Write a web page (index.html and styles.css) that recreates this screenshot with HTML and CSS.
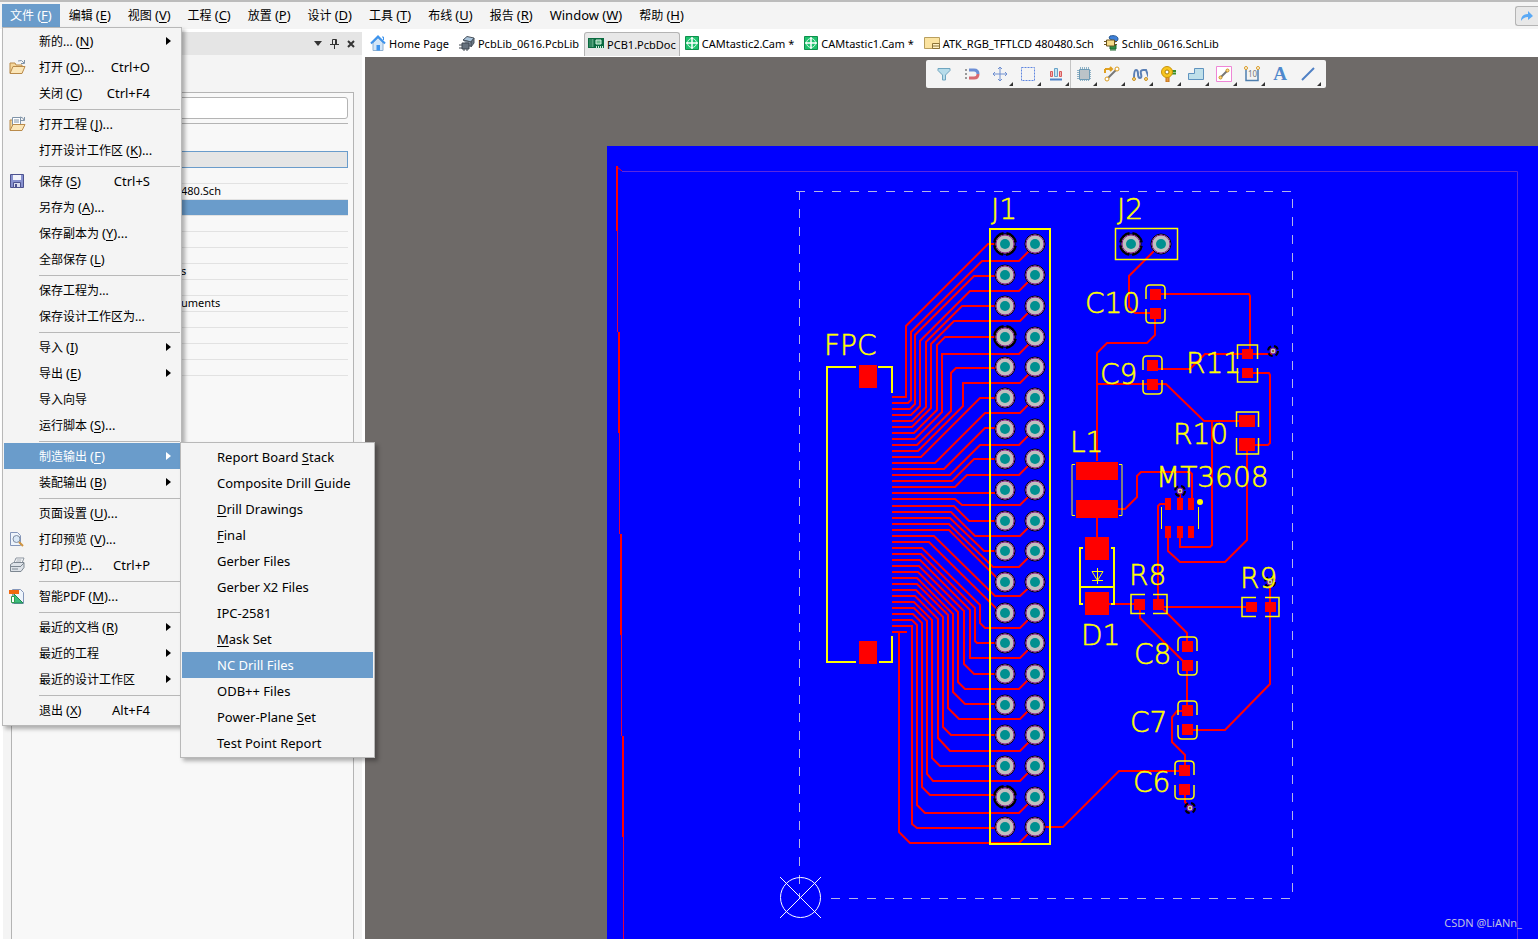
FILE: index.html
```html
<!DOCTYPE html>
<html lang="zh-CN">

<head>
    <meta charset="UTF-8">
    <meta name="viewport" content="width=device-width, initial-scale=1.0">
    <title>PCB1.PcbDoc</title>
    <link rel="stylesheet" href="styles.css">
</head>

<body>

    <!-- Top menu bar -->
    <header class="menubar">
        <nav class="menubar-items">
            <button class="open">文件 <span class="key">(<u>F</u>)</span></button>
            <button>编辑 <span class="key">(<u>E</u>)</span></button>
            <button>视图 <span class="key">(<u>V</u>)</span></button>
            <button>工程 <span class="key">(<u>C</u>)</span></button>
            <button>放置 <span class="key">(<u>P</u>)</span></button>
            <button>设计 <span class="key">(<u>D</u>)</span></button>
            <button>工具 <span class="key">(<u>T</u>)</span></button>
            <button>布线 <span class="key">(<u>U</u>)</span></button>
            <button>报告 <span class="key">(<u>R</u>)</span></button>
            <button><span class="key">Window (<u>W</u>)</span></button>
            <button>帮助 <span class="key">(<u>H</u>)</span></button>
        </nav>
        <button class="share" aria-label="Share">
            <svg width="14" height="12" viewBox="0 0 14 12"><path d="M1 11c0-5 3-7 7-7V1l5 5-5 4V7C5 7 3 8 1 11z" fill="#5aa9f5" /></svg>
        </button>
    </header>

    <div class="workspace">
        <!-- Projects panel -->
        <aside class="panel">
            <div class="panel-title">
                <svg width="8" height="5" viewBox="0 0 8 5"><path d="M0 0h8L4 5z" fill="#333" /></svg>
                <svg width="9" height="10" viewBox="0 0 9 10"><path d="M2.500 5V.5h4V5M0 5.500h9M4.500 6v4M5.500 0v5" fill="none" stroke="#333" /></svg>
                <svg width="8" height="8" viewBox="0 0 8 8"><path d="M1 1l6 6M7 1L1 7" stroke="#333" stroke-width="2" /></svg>
            </div>
            <div class="panel-box">
                <input type="text" class="panel-search" aria-label="Search">
                <ul class="tree">
                    <li class="focused"></li>
                    <li></li>
                    <li>480.Sch</li>
                    <li class="selected"></li>
                    <li></li>
                    <li></li>
                    <li></li>
                    <li>s</li>
                    <li></li>
                    <li>uments</li>
                    <li></li>
                    <li></li>
                    <li></li>
                    <li></li>
                </ul>
            </div>
        </aside>

        <main class="editor">
            <nav class="tabs">
                <a href="#">
                    <svg width="16" height="16" viewBox="0 0 16 16"><path d="M3 8v7.500h10V8L8 3z" fill="#d3e6f8" stroke="#8fb0d0" /><path d="M1 8.500l7-7 7 7" fill="none" stroke="#3d94ee" stroke-width="2" /><path d="M12 2h1.500v3" stroke="#3d94ee" fill="none" /><path d="M6.500 10h3.500v5.500H6.500z" fill="#3d94ee" /></svg>
                    Home Page</a>
                <a href="#">
                    <svg width="16" height="16" viewBox="0 0 16 16"><path d="M4 5l4-3.500 7 1.500-3 4z" fill="#a9c3da" stroke="#49535e" /><path d="M12 7l3-4v5l-3 4z" fill="#6d7a87" stroke="#49535e" /><path d="M4 5l8 2v4H9" fill="#8d9aa8" stroke="#49535e" /><path d="M3 8h7v6H3zM0 10h3M0 13h3M5 14v2M8 14v2" fill="#67727e" stroke="#3e4750" /></svg>
                    PcbLib_0616.PcbLib</a>
                <a href="#" class="active">
                    <svg width="16" height="16" viewBox="0 0 16 16"><path d="M0 2h16v10H0z" fill="#0a6b40" /><path d="M1.500 4h4M1.500 6h4M1.500 8h4M1.500 10h4" stroke="#a5e0bd" stroke-dasharray="1 1 3 0" /><path d="M8 4h5v4H8z" fill="#6dbb8e" stroke="#d2f0de" /><path d="M8.500 10v3M10.500 10v3M12.500 10v3M14.500 10v3" stroke="#d2f0de" /></svg>
                    PCB1.PcbDoc</a>
                <a href="#">
                    <svg width="14" height="14" viewBox="0 0 14 14"><path d="M.5.5h13v13H.5z" fill="#1ec26e" stroke="#0f8f4c" /><circle cx="7" cy="7" r="4.500" fill="none" stroke="#d7f6e5" /><path d="M7 1v12M1 7h12" stroke="#fff" stroke-width="1.500" /></svg>
                    CAMtastic2.Cam *</a>
                <a href="#">
                    <svg width="14" height="14" viewBox="0 0 14 14"><path d="M.5.5h13v13H.5z" fill="#1ec26e" stroke="#0f8f4c" /><circle cx="7" cy="7" r="4.500" fill="none" stroke="#d7f6e5" /><path d="M7 1v12M1 7h12" stroke="#fff" stroke-width="1.500" /></svg>
                    CAMtastic1.Cam *</a>
                <a href="#">
                    <svg width="16" height="12" viewBox="0 0 16 12"><path d="M.5.5h15v11H.5z" fill="#fbe3a0" stroke="#b99f5e" /><path d="M8.500 6.500h7v5h-7zM8.500 9h7" fill="#fff1c4" stroke="#8c7438" /></svg>
                    ATK_RGB_TFTLCD 480480.Sch</a>
                <a href="#">
                    <svg width="15" height="16" viewBox="0 0 15 16"><path d="M6 1c4-1 8 0 8 3 0 2-2 3-4 3L5 3z" fill="#3d7fd8" stroke="#23558f" /><path d="M6 10h6v4H6zM7 14v2M9 14v2M11 14v2" fill="#2f8f45" stroke="#1c6a2f" /><path d="M2.500 5h8v6h-8zM0 6.500h2M0 9.500h2M11 6.500h2M11 9.500h2" fill="#f7dd8a" stroke="#6a5522" /></svg>
                    Schlib_0616.SchLib</a>
            </nav>

            <div class="canvas">
                <svg class="board" viewBox="365 57 1173 882" preserveAspectRatio="xMinYMin slice">
                    <defs>
                        <g id="pad">
                            <circle r="10" fill="#c0c0c0" stroke="#000" />
                            <circle r="9" fill="none" stroke="#8a1a8a" />
                            <circle r="5" fill="#009090" />
                        </g>
                        <g id="thermal">
                            <circle r="11" fill="none" stroke="#000" stroke-width="2" stroke-dasharray="14 3" stroke-dashoffset="-2" />
                            <use href="#pad" />
                        </g>
                        <g id="row">
                            <use href="#pad" x="1005" />
                            <use href="#pad" x="1035" />
                        </g>
                        <g id="via">
                            <circle r="5" fill="none" stroke="#000" stroke-width="2" stroke-dasharray="5 3" />
                            <circle r="3" fill="#c0c0c0" stroke="#8a1a8a" />
                            <circle r="1" fill="#8a5a00" />
                        </g>
                        <!-- 0603 part, vertical, centred on 0,0 -->
                        <g id="cap">
                            <path class="pad-red" d="M-5-15H6V-4H-5zM-5 4H6v11H-5z" />
                            <path class="silk" d="M-9-5v-10q0-4 4-4H6q4 0 4 4v10M-9 5v10q0 4 4 4H6q4 0 4-4V5" />
                        </g>
                    </defs>

                    <rect x="607" y="146" width="931" height="793" fill="#00f" />
                    <path d="M622 171.500H1517.500V939M624 939" fill="none" stroke="#5a28e0" />
                    <path d="M622 171l-5-4" stroke="#e00030" />
                    <path d="M617 166v65M619 332v101M621 534v101M623 736v101" stroke="#f00" stroke-width="2" />
                    <path d="M617.500 231v101M619.500 433v101M621.500 635v101M623.500 837v102" stroke="#e00040" />
                    <path d="M799.500 191V898M1292.500 199V898M796 191.500H1292M831 898.500H1292" stroke="#b4b4e8" stroke-dasharray="9 9" />
                    <g stroke="#fff" fill="none">
                        <circle cx="800.500" cy="897.500" r="20" />
                        <path d="M780 877l41 41M780 918l41-41" />
                    </g>

                    <!-- FPC to J1 fan-out -->
                    <g class="trace">
                        <path d="M892 397H906V326L988 244H1005" />
                        <path d="M892 403H908L911 400V332L982 261H1019L1035 245" />
                        <path d="M892 409H910L915 404V335L974 276H1005" />
                        <path d="M892 415H911L920 406V341L970 291H1019L1035 275" />
                        <path d="M892 421H912L926 407V342L962 306H1005" />
                        <path d="M892 427H912L931 408V344L954 321H1020L1035 306" />
                        <path d="M892 433H914L937 410V345L945 337H1005" />
                        <path d="M892 439H915L942 412V354H1019L1035 338" />
                        <path d="M892 445H917L951 411V373L956 368H1005" />
                        <path d="M892 451H918L963 406V383H1020L1035 368" />
                        <path d="M892 457H921L980 398H1005" />
                        <path d="M892 463H935L985 413H1020L1035 398" />
                        <path d="M892 469H944L985 428H1005" />
                        <path d="M892 475H950L980 445H1019L1035 429" />
                        <path d="M892 481H952L974 459H1005" />
                        <path d="M892 487H955L967 475H1019L1035 459" />
                        <path d="M892 493H1005" />
                        <path d="M892 499H955L962 505H1020L1035 490" />
                        <path d="M892 506H954L969 521H1005" />
                        <path d="M892 512H951L975 536H1020L1035 521" />
                        <path d="M892 518H950L984 551H1005" />
                        <path d="M892 524H949L993 567H1019L1035 551" />
                        <path d="M892 530H949L1005 586" />
                        <path d="M892 536H934L995 596H1020L1035 582" />
                        <path d="M892 542H929L1005 617" />
                        <path d="M892 548H922L980 605V623L985 628H1020L1035 613" />
                        <path d="M892 554H921L975 608V641L977 643H1005" />
                        <path d="M892 560H920L970 610V658H1020L1035 643" />
                        <path d="M892 566H919L964 611V664L974 674H1005" />
                        <path d="M892 572H918L958 612V682L965 689H1019L1035 673" />
                        <path d="M892 578H917L953 614V692L965 704H1005" />
                        <path d="M892 584H917L948 615V708L959 719H1020L1035 704" />
                        <path d="M892 590H916L943 617V727L951 735H1005" />
                        <path d="M892 596H915L938 619V738L950 751H1020L1035 736" />
                        <path d="M892 602H914L932 620V758L940 766H1005" />
                        <path d="M892 608H914L927 621V774L933 781H1020L1035 766" />
                        <path d="M892 614H913L922 623V787L930 795H1005" />
                        <path d="M892 620H912L917 625V805L925 813H1019L1035 797" />
                        <path d="M892 626H912V824L917 828H1005" />
                        <path d="M892 632H907M899 632V832L910 843H1019L1035 827" />
                    </g>

                    <!-- Boost converter traces -->
                    <g class="trace">
                        <path d="M1161 244L1129 276V307L1135 313H1155V335L1147 343H1107L1097 353V461" />
                        <path d="M1155 294H1249L1250 296V354H1272" />
                        <path d="M1153 369H1190L1205 354H1247" />
                        <path d="M1097 384H1166L1204 421H1247M1212 421V545L1210 547H1180V532" />
                        <path d="M1247 373H1269L1270 375V443L1268 445H1247V540L1225 562H1180L1168 551V532" />
                        <path d="M1097 518V540M1097 604H1140V618L1187 665V711H1177L1172 717V742L1185 755V771M1185 790V802L1190 807" />
                        <path d="M1118 509H1125L1137 497V476L1141 472H1190L1192 474V504" />
                        <path d="M1180 491V504M1168 504H1160L1158 506V604L1187 633V647" />
                        <path d="M1158 607H1251M1270 583V684L1225 730H1187" />
                        <path d="M1185 771H1119L1063 827H1035" />
                    </g>

                    <!-- SMD pads -->
                    <path class="pad-red" d="M859 365h18v23h-18zM859 641h18v23h-18zM1076 462h42v18h-42zM1076 500h42v18h-42zM1085 537h24v23h-24zM1085 592h24v23h-24z" />
                    <path class="pad-red" d="M1165 498h6v12h-6zM1177 498h6v12h-6zM1188 498h6v12h-6zM1165 526h6v12h-6zM1177 526h6v12h-6zM1188 526h6v12h-6z" />
                    <path class="pad-red" d="M1242 349h11v10h-11zM1242 368h11v10h-11zM1239 415h16v12h-16zM1239 438h16v13h-16z" />
                    <path class="pad-red" d="M1134 599h11v11h-11zM1153 599h11v11h-11zM1246 602h11v10h-11zM1265 602h11v10h-11z" />
                    <use href="#cap" x="1155" y="304" />
                    <use href="#cap" x="1152" y="375" />
                    <use href="#cap" x="1187" y="656" />
                    <use href="#cap" x="1187" y="720" />
                    <use href="#cap" x="1184" y="780" />

                    <!-- Silkscreen -->
                    <g class="silk">
                        <path d="M1237.500 359v-14h20v14M1237.500 368v14h20v-14M1236.500 427v-15h22v15M1236.500 438v16h22v-16" />
                        <path d="M1145 594.500h-14v19h14M1153 594.500h14v19h-14M1256 597.500h-14v19h14M1265 597.500h14v19h-14" />
                        <path d="M1115.500 228.500h62v31h-62z" />
                    </g>
                    <g class="silk thin">
                        <path d="M1075 464.500h-3v51h3M1119 464.500h3v51h-3M1161.500 507v22M1198.500 507v22" />
                        <path d="M1097.500 568v16M1092 571.500h11l-5.500 9zM1092 580.500h11" />
                    </g>
                    <g class="silk bold">
                        <path d="M856 367H827V662H856M878 367H892V393M892 636V662H879" />
                        <path d="M990 229h60v615h-60z" />
                        <path d="M1083 548h-3v56h3M1111 548h3v56h-3M1080 587h34" />
                    </g>
                    <circle cx="1200" cy="502" r="3" fill="#ff0" />

                    <!-- Through-hole pads -->
                    <use href="#row" y="244" />
                    <use href="#row" y="275" />
                    <use href="#row" y="306" />
                    <use href="#row" y="337" />
                    <use href="#row" y="367" />
                    <use href="#row" y="398" />
                    <use href="#row" y="429" />
                    <use href="#row" y="459" />
                    <use href="#row" y="490" />
                    <use href="#row" y="521" />
                    <use href="#row" y="551" />
                    <use href="#row" y="582" />
                    <use href="#row" y="613" />
                    <use href="#row" y="643" />
                    <use href="#row" y="674" />
                    <use href="#row" y="705" />
                    <use href="#row" y="735" />
                    <use href="#row" y="766" />
                    <use href="#row" y="797" />
                    <use href="#row" y="827" />
                    <use href="#thermal" x="1005" y="244" />
                    <use href="#thermal" x="1005" y="337" />
                    <use href="#thermal" x="1005" y="797" />
                    <use href="#thermal" x="1131" y="244" />
                    <use href="#pad" x="1161" y="244" />
                    <use href="#via" x="1273" y="351" />
                    <use href="#via" x="1180" y="491" />
                    <use href="#via" x="1270" y="582" />
                    <use href="#via" x="1190" y="808" />

                    <g class="designator">
                        <text x="824" y="355">FPC</text>
                        <text x="991" y="219">J1</text>
                        <text x="1117" y="219">J2</text>
                        <text x="1085" y="313">C10</text>
                        <text x="1100" y="384">C9</text>
                        <text x="1186" y="373">R11</text>
                        <text x="1173" y="444">R10</text>
                        <text x="1070" y="452">L1</text>
                        <text x="1156" y="487">MT3608</text>
                        <text x="1129" y="585">R8</text>
                        <text x="1240" y="588">R9</text>
                        <text x="1081" y="645">D1</text>
                        <text x="1134" y="664">C8</text>
                        <text x="1130" y="732">C7</text>
                        <text x="1133" y="792">C6</text>
                    </g>
                </svg>

                <!-- Floating active bar -->
                <div class="active-bar">
                    <button aria-label="Filter"><svg viewBox="0 0 16 16"><path d="M2 2.500h12v2L9.500 9v5h-3V9L2 4.500z" fill="#b7dcea" stroke="#6fa5bf" /></svg></button>
                    <button aria-label="Snap"><svg viewBox="0 0 16 16"><path d="M5 4h5q4 0 4 4" fill="none" stroke="#6d8fd6" stroke-width="3" /><path d="M5 12h5q4 0 4-4" fill="none" stroke="#d86a72" stroke-width="3" /><path d="M1 4h2M1 8h2M1 12h2" stroke="#999" stroke-width="2" /></svg></button>
                    <button class="more" aria-label="Move"><svg viewBox="0 0 16 16"><path d="M8 1v14M1 8h14M6 3l2-2 2 2M6 13l2 2 2-2M3 6L1 8l2 2M13 6l2 2-2 2" fill="none" stroke="#6f8fd0" /></svg></button>
                    <button class="more" aria-label="Select"><svg viewBox="0 0 16 16"><path d="M1.500 1.500h13v13h-13z" fill="none" stroke="#5f86e0" stroke-dasharray="2 1" /></svg></button>
                    <button class="more divided" aria-label="Align"><svg viewBox="0 0 16 16"><path d="M2.500 5.500h2v5h-2zM11.500 5.500h2v5h-2z" fill="#f2b0b0" stroke="#d85c5c" /><path d="M6.500 2.500h3v8h-3z" fill="#c4e4f2" stroke="#68a2c8" /><path d="M2 13.500h12" stroke="#4f83c8" stroke-width="2" /></svg></button>
                    <button class="more" aria-label="Component"><svg viewBox="0 0 16 16"><path d="M4.500 1v14M6.500 1v14M8.500 1v14M10.500 1v14M12.500 1v14M1 4.500h14M1 6.500h14M1 8.500h14M1 10.500h14M1 12.500h14" stroke="#8fb2c6" /><path d="M3.500 3.500h10v10h-10z" fill="#bcc3c8" stroke="#6d9ab5" /></svg></button>
                    <button class="more" aria-label="Route"><svg viewBox="0 0 16 16"><path d="M1 3h7M6 1l2 2-2 2M1 3v4" fill="none" stroke="#e0a020" stroke-width="2" /><path d="M4 12l8-8" stroke="#777" stroke-width="2" /><circle cx="3" cy="13" r="2" fill="#fff" stroke="#d89a20" /><circle cx="13" cy="3" r="2" fill="#fff" stroke="#d89a20" /></svg></button>
                    <button class="more" aria-label="Tune"><svg viewBox="0 0 16 16"><path d="M2 12q0-8 2-8t2 4 2 4 1-4 2-4 3 0 3 8" fill="none" stroke="#5a7fb5" stroke-width="2" /><circle cx="2" cy="13" r="1.500" fill="#f7d98c" stroke="#c99020" /><circle cx="14" cy="13" r="1.500" fill="#f7d98c" stroke="#c99020" /></svg></button>
                    <button class="more" aria-label="Via"><svg viewBox="0 0 16 16"><path d="M6 9h3v7H6z" fill="#e8993a" stroke="#c0701a" /><path d="M11 5h5M11 7.500h5" stroke="#3a8f2a" stroke-width="2" /><circle cx="7" cy="6" r="5.500" fill="#f8c51e" stroke="#c9940a" /><circle cx="7" cy="6" r="2" fill="#fff" stroke="#a57a0a" /></svg></button>
                    <button class="more" aria-label="Polygon"><svg viewBox="0 0 16 16"><path d="M.5 13.500V7.500h6v-5h9v11z" fill="#bfe0ea" stroke="#5f93bf" /></svg></button>
                    <button class="more" aria-label="Keepout"><svg viewBox="0 0 16 16"><path d="M.5.5h15v15H.5z" fill="#fff" stroke="#ef86d6" /><path d="M5 11l6-6" stroke="#777" stroke-width="2" /><circle cx="4.500" cy="11.500" r="1.500" fill="#f7d98c" stroke="#c99020" /><circle cx="11.500" cy="4.500" r="1.500" fill="#f7d98c" stroke="#c99020" /></svg></button>
                    <button class="more" aria-label="Dimension"><svg viewBox="0 0 16 16"><path d="M2 3v11.500h12V3" fill="none" stroke="#4f7fae" stroke-width="1.500" /><text x="4" y="11" font-size="8" fill="#777">10</text><circle cx="2" cy="2" r="1.500" fill="#fff" stroke="#d89a20" /><circle cx="14" cy="2" r="1.500" fill="#fff" stroke="#d89a20" /></svg></button>
                    <button class="text-tool" aria-label="Text">A</button>
                    <button class="more" aria-label="Line"><svg viewBox="0 0 16 16"><path d="M2 14L14 2" stroke="#4f80c4" stroke-width="2" /></svg></button>
                </div>
                <span class="watermark">CSDN @LiANn_</span>
            </div>
        </main>
    </div>

    <!-- File menu -->
    <div class="menu file-menu">
        <button class="sub">新的... <span class="key">(<u>N</u>)</span></button>
        <button>
            <svg width="18" height="16" viewBox="0 0 18 16"><path d="M1 14V4h5l1 2h6v8z" fill="#f5d79b" stroke="#b98a4a" /><path d="M1 14.500l3-7h12l-3 7z" fill="#fbe6b8" stroke="#b98a4a" /><path d="M9 2q4-2 6 2M15.500 1v3.500H12" fill="none" stroke="#7f93a8" /></svg>
            打开 <span class="key">(<u>O</u>)...</span><kbd>Ctrl+O</kbd></button>
        <button>关闭 <span class="key">(<u>C</u>)</span><kbd>Ctrl+F4</kbd></button>
        <hr>
        <button>
            <svg width="18" height="16" viewBox="0 0 18 16"><path d="M1 14V4h3v10z" fill="#f5d79b" stroke="#b98a4a" /><path d="M3.500 1.500h8v9h-8z" fill="#fff" stroke="#7f93a8" /><path d="M5 4h5M5 6h5" stroke="#7f93a8" /><path d="M1 14.500l3-6h12l-3 6z" fill="#fbe6b8" stroke="#b98a4a" /><path d="M11 1q3 0 4 3M15.500 1v3.500H12" fill="none" stroke="#7f93a8" /></svg>
            打开工程 <span class="key">(<u>J</u>)...</span></button>
        <button>打开设计工作区 <span class="key">(<u>K</u>)...</span></button>
        <hr>
        <button>
            <svg width="16" height="16" viewBox="0 0 16 16"><path d="M1.500 1.500h13v13h-13z" fill="#8791cf" stroke="#4c528f" /><path d="M4 2h8v5H4z" fill="#f2f3fa" /><path d="M4.500 9.500h7v5h-7z" fill="#d9dcf0" stroke="#4c528f" /><path d="M6 11h2v3H6z" fill="#4c528f" /></svg>
            保存 <span class="key">(<u>S</u>)</span><kbd>Ctrl+S</kbd></button>
        <button>另存为 <span class="key">(<u>A</u>)...</span></button>
        <button>保存副本为 <span class="key">(<u>Y</u>)...</span></button>
        <button>全部保存 <span class="key">(<u>L</u>)</span></button>
        <hr>
        <button>保存工程为...</button>
        <button>保存设计工作区为...</button>
        <hr>
        <button class="sub">导入 <span class="key">(<u>I</u>)</span></button>
        <button class="sub">导出 <span class="key">(<u>E</u>)</span></button>
        <button>导入向导</button>
        <button>运行脚本 <span class="key">(<u>S</u>)...</span></button>
        <hr>
        <button class="sub current">制造输出 <span class="key">(<u>F</u>)</span></button>
        <button class="sub">装配输出 <span class="key">(<u>B</u>)</span></button>
        <hr>
        <button>页面设置 <span class="key">(<u>U</u>)...</span></button>
        <button>
            <svg width="16" height="16" viewBox="0 0 16 16"><path d="M1.500 1.500h7l3 3v10h-10z" fill="#eef4fb" stroke="#8496ba" /><circle cx="7.500" cy="8" r="3.500" fill="#d9e8f7" stroke="#7f8ba0" /><path d="M10 11l4 4" stroke="#cf9440" stroke-width="2" /></svg>
            打印预览 <span class="key">(<u>V</u>)...</span></button>
        <button>
            <svg width="16" height="16" viewBox="0 0 16 16"><path d="M5 6l2-5h8l-2 5z" fill="#fff" stroke="#8a939e" /><path d="M7.500 3h5M7 5h5" stroke="#9aa3ae" /><path d="M1.500 7.500l3-2h10.500v5l-3 4H1.500z" fill="#dde2e8" stroke="#7d8791" /><path d="M2 9.500h10M3 12h6M12 9l3-3" stroke="#7d8791" /></svg>
            打印 <span class="key">(<u>P</u>)...</span><kbd>Ctrl+P</kbd></button>
        <hr>
        <button>
            <svg width="16" height="16" viewBox="0 0 16 16"><path d="M3.500 1.500h8l3 3v11h-11z" fill="#eef4fb" stroke="#8496ba" /><path d="M0 2h10v4H0z" fill="#f0690f" /><path d="M5 6l9 9H5z" fill="#3ebd7c" stroke="#1f8a54" /><path d="M2.500 8.500h3v6h-3z" fill="#fff" stroke="#2d9b4c" /></svg>
            <span>智能PDF</span> <span class="key">(<u>M</u>)...</span></button>
        <hr>
        <button class="sub">最近的文档 <span class="key">(<u>R</u>)</span></button>
        <button class="sub">最近的工程</button>
        <button class="sub">最近的设计工作区</button>
        <hr>
        <button>退出 <span class="key">(<u>X</u>)</span><kbd>Alt+F4</kbd></button>
    </div>

    <!-- Fabrication outputs submenu -->
    <div class="menu fab-menu" lang="en">
        <button>Report Board <u>S</u>tack</button>
        <button>Composite Drill <u>G</u>uide</button>
        <button><u>D</u>rill Drawings</button>
        <button><u>F</u>inal</button>
        <button>Gerber Files</button>
        <button>Gerber X2 Files</button>
        <button>IPC-2581</button>
        <button><u>M</u>ask Set</button>
        <button class="current">NC Drill Files</button>
        <button>ODB++ Files</button>
        <button>Power-Plane <u>S</u>et</button>
        <button>Test Point Report</button>
    </div>

</body>

</html>
```
FILE: styles.css
```css
* {
    box-sizing: border-box;
}

body {
    margin: 0;
    height: 100vh;
    display: flex;
    flex-direction: column;
    overflow: hidden;
    font-family: "Noto Sans", "Noto Sans CJK SC", sans-serif;
    font-size: 12px;
    color: #000;
    background: #fff;
}

button {
    font: inherit;
    color: inherit;
    background: none;
    border: none;
    margin: 0;
    padding: 0;
    white-space: nowrap;
}

u {
    text-underline-offset: 2px;
}

.key,
kbd {
    font-family: inherit;
    font-size: 13px;
}

/* Menu bar */
.menubar {
    flex: none;
    height: 29px;
    padding: 2px 0 0 2px;
    display: flex;
    justify-content: space-between;
    background: #f4f4f4;
    border-top: 2px solid #bcbcbc;
}

.menubar-items {
    display: flex;
    gap: 1px;
}

.menubar-items button {
    height: 23px;
    padding: 0 8px;
    line-height: 22px;
}

.menubar-items .open,
.menu .current {
    background: #6a9ccb;
    color: #fff;
}

.share {
    width: 23px;
    height: 20px;
    margin-top: 2px;
    padding-left: 4px;
    display: flex;
    align-items: center;
    background: #e8e8e8;
    border: 1px solid #b4b4b4;
    border-right: none;
    border-radius: 3px 0 0 3px;
}

.workspace {
    flex: 1;
    min-height: 0;
    display: flex;
}

/* Left panel */
.panel {
    flex: none;
    width: 365px;
    padding: 3px 3px 0;
    display: flex;
    flex-direction: column;
    background: linear-gradient(#f4f4f4, #f4f4f4) content-box #fff;
}

.panel-title {
    height: 23px;
    padding-right: 7px;
    display: flex;
    justify-content: flex-end;
    align-items: center;
    gap: 8px;
    background: #e5e5e5;
}

.panel-box {
    flex: 1;
    margin: 37px 8px 0;
    padding: 4px 5px 0;
    background: #f8f8f8;
    border: 1px solid #b4b4b4;
    border-bottom: none;
}

.panel-search {
    display: block;
    width: 100%;
    height: 22px;
    background: #fff;
    border: 1px solid #b4b4b4;
    border-radius: 3px;
}

.tree {
    list-style: none;
    margin: 4px 0 0;
    padding: 27px 0 0;
    border-top: 1px solid #b4b4b4;
    font-size: 11px;
}

.tree li {
    height: 16px;
    padding-left: 164px;
    line-height: 14px;
    border-bottom: 1px solid #e2e2e2;
}

.tree .focused {
    height: 17px;
    background: #e5e5e5;
    border: 1px solid #6a9ccb;
}

.tree .selected {
    background: #6a9ccb;
}

/* Document tabs */
.editor {
    flex: 1;
    min-width: 0;
    display: flex;
    flex-direction: column;
}

.tabs {
    flex: none;
    height: 28px;
    padding-top: 3px;
    display: flex;
    font-size: 11px;
}

.tabs a {
    height: 24px;
    padding: 0 4px 2px;
    display: flex;
    align-items: center;
    gap: 3px;
    color: #000;
    text-decoration: none;
    white-space: nowrap;
    border: 1px solid transparent;
}

.tabs .active {
    padding: 0 3px 1px;
    background: #e8e8e8;
    border-color: #b4b4b4;
    border-bottom: none;
    border-radius: 3px 3px 0 0;
}

/* PCB canvas */
.canvas {
    position: relative;
    flex: 1;
    min-height: 0;
    background: #6e6a68;
}

.board {
    display: block;
    width: 100%;
    height: 100%;
}

.trace {
    fill: none;
    stroke: #f00;
    stroke-width: 2;
}

.pad-red {
    fill: #f00;
}

.silk {
    fill: none;
    stroke: #ff0;
    stroke-width: 1.5;
}

.thin {
    stroke-width: 1;
}

.bold {
    stroke-width: 2;
}

.designator {
    font-family: "DejaVu Sans Light", "DejaVu Sans", sans-serif;
    font-weight: 200;
    font-size: 28px;
    fill: #ff0;
    stroke: #ff0;
    stroke-width: 0.5;
}

.active-bar {
    position: absolute;
    top: 3px;
    left: 561px;
    height: 28px;
    padding: 0 4px;
    display: flex;
    background: #f4f4f4;
    border-radius: 2px;
}

.active-bar button {
    position: relative;
    width: 28px;
    height: 28px;
    padding: 6px;
}

.active-bar svg {
    display: block;
    width: 16px;
    height: 16px;
}

.active-bar .more::after {
    content: "";
    position: absolute;
    right: 1px;
    bottom: 2px;
    border: 2px solid #333;
    border-top-color: transparent;
    border-left-color: transparent;
}

.active-bar .divided {
    box-shadow: 1px 0 #c4c4c4;
}

.active-bar .text-tool {
    padding: 0;
    font: bold 19px/28px "Liberation Serif", serif;
    color: #4f88cc;
}

.watermark {
    position: absolute;
    right: 16px;
    bottom: 8px;
    font-size: 11px;
    line-height: 16px;
    color: #c0c0e0;
}

/* Drop-down menus */
.menu {
    position: absolute;
    display: flex;
    flex-direction: column;
    background: #f4f4f4;
    border: 1px solid #b8b8b8;
    box-shadow: 3px 3px 4px rgba(0, 0, 0, 0.3);
}

.menu button {
    position: relative;
    height: 26px;
    padding-left: 35px;
    display: flex;
    align-items: center;
    gap: 3px;
    text-align: left;
}

.menu hr {
    width: 100%;
    height: 1px;
    margin: 3px 0 1px;
    border: none;
    background: linear-gradient(#b8b8b8, #b8b8b8) 35px 0 no-repeat;
}

.menu svg {
    position: absolute;
    left: 5px;
}

.menu kbd {
    position: absolute;
    right: 30px;
}

.file-menu {
    top: 27px;
    left: 2px;
    width: 180px;
    padding: 0 1px 2px;
}

.sub::after {
    content: "";
    position: absolute;
    right: 9px;
    border: 4px solid transparent;
    border-left: 5px solid;
    border-right: none;
}

.fab-menu {
    top: 442px;
    left: 180px;
    width: 195px;
    padding: 1px;
    font-size: 13px;
}

.fab-menu button {
    display: block;
    line-height: 24px;
}
```
